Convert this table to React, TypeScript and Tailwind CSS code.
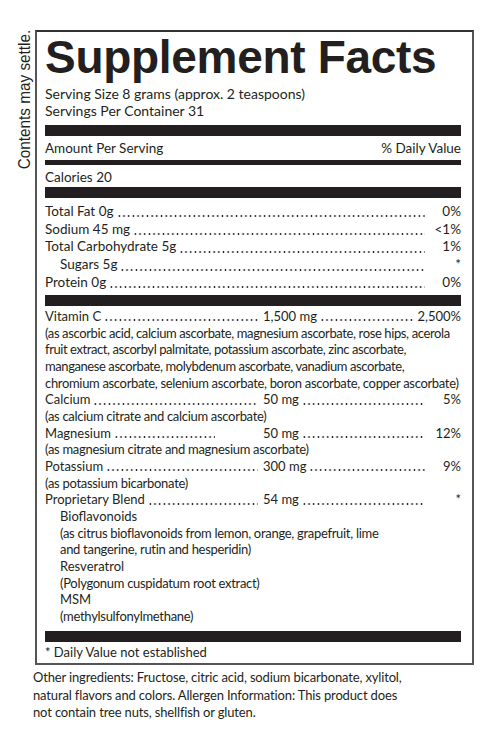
import React from "react";

const body = { fontFamily: "Lato, 'Open Sans', sans-serif" };
const helv = { fontFamily: "'Liberation Sans', Arial, sans-serif" };

// dotted leader drawn as a row of small dots
function Dots({ top = "mt-[11px]" }: { top?: string }) {
  return (
    <span
      className={
        "block h-[4px] min-w-0 flex-1 bg-[radial-gradient(circle,#231f20_0.75px,transparent_1.15px)] bg-[length:4.7px_4px] bg-left bg-repeat-x " +
        top
      }
    ></span>
  );
}

function Bar({ h }: { h: string }) {
  return <div className={"w-full bg-[#231f20] " + h}></div>;
}

// simple nutrient row: label .... value
function Row({ label, value, indent }: { label: string; value: string; indent?: boolean }) {
  return (
    <div className={"flex items-start leading-[17.7px] " + (indent ? "pl-[15px]" : "")}>
      <span className="whitespace-nowrap pr-[3px]">{label}</span>
      <Dots top="mt-[11.5px]" />
      <span className="w-[36px] shrink-0 text-right">{value}</span>
    </div>
  );
}

// row with amount column
function AmtRow({ label, amount, value, labelPad = "" }: { label: string; amount: string; value: string; labelPad?: string }) {
  return (
    <div className="flex items-start">
      <div className={"flex w-[218px] shrink-0 items-start pr-[5px] " + labelPad}>
        <span className="whitespace-nowrap pr-[3px]">{label}</span>
        <Dots top="mt-[10.5px]" />
      </div>
      <div className="flex min-w-0 flex-1 items-start">
        <span className="whitespace-nowrap pr-[3px]">{amount}</span>
        <Dots top="mt-[10.5px]" />
      </div>
      <span className="min-w-[36px] shrink-0 pl-[3px] text-right">{value}</span>
    </div>
  );
}

export default function App() {
  return (
    <div className="h-[736px] w-[496px] bg-white pt-[30px] text-[#231f20]" style={body}>
      <div className="flex">
        {/* Side note, reads bottom to top */}
        <div className="flex w-[34.5px] shrink-0 items-start justify-end pr-[1px]">
          <div
            className="-mt-[8px] h-fit rotate-180 scale-y-[0.9] text-[17px] leading-[18px] [writing-mode:vertical-rl]"
            style={helv}
          >
            Contents may settle.
          </div>
        </div>

        {/* Facts panel */}
        <div className="w-[439px] border-2 border-[#555] border-t-[#333] pb-[3px] pl-[8.5px] pr-[10.5px] pt-[2px] text-[13px]">
          <h1 className="text-[46px] font-bold leading-[46px] tracking-[-0.3px]" style={helv}>
            Supplement Facts
          </h1>
          <div className="mt-[6px] text-[14px] leading-[16.7px]">
            <p>Serving Size 8 grams (approx. 2 teaspoons)</p>
            <p>Servings Per Container 31</p>
          </div>
          <div className="mt-[6px]">
            <Bar h="h-[11px]" />
          </div>
          <div className="mt-[4px] flex justify-between text-[13.5px] leading-[16.5px]">
            <span>Amount Per Serving</span>
            <span>% Daily Value</span>
          </div>
          <div className="mt-[3px]">
            <Bar h="h-[5px]" />
          </div>
          <p className="mt-[4px] text-[13.5px] leading-[16.5px]">Calories 20</p>
          <div className="mt-[2px]">
            <Bar h="h-[11px]" />
          </div>

          <div className="mt-[4.5px] text-[13.5px]">
            <Row label="Total Fat 0g" value="0%" />
            <Row label="Sodium 45 mg" value="<1%" />
            <Row label="Total Carbohydrate 5g" value="1%" />
            <Row label="Sugars 5g" value="*" indent />
            <Row label="Protein 0g" value="0%" />
          </div>
          <div className="mt-[4px]">
            <Bar h="h-[11px]" />
          </div>

          <div className="mt-[1.5px] leading-[16.67px]">
            <AmtRow label="Vitamin C" amount="1,500 mg" value="2,500%" />
            <p className="whitespace-nowrap tracking-[-0.38px]">
              (as ascorbic acid, calcium ascorbate, magnesium ascorbate, rose hips, acerola
            </p>
            <p className="whitespace-nowrap tracking-[-0.42px]">
              fruit extract, ascorbyl palmitate, potassium ascorbate, zinc ascorbate,
            </p>
            <p className="whitespace-nowrap tracking-[-0.42px]">
              manganese ascorbate, molybdenum ascorbate, vanadium ascorbate,
            </p>
            <p className="whitespace-nowrap tracking-[-0.33px]">
              chromium ascorbate, selenium ascorbate, boron ascorbate, copper ascorbate)
            </p>
            <AmtRow label="Calcium" amount="50 mg" value="5%" />
            <p className="tracking-[-0.3px]">(as calcium citrate and calcium ascorbate)</p>
            <AmtRow label="Magnesium" amount="50 mg" value="12%" labelPad="pr-[48px]" />
            <p className="tracking-[-0.3px]">(as magnesium citrate and magnesium ascorbate)</p>
            <AmtRow label="Potassium" amount="300 mg" value="9%" />
            <p className="tracking-[-0.3px]">(as potassium bicarbonate)</p>
            <AmtRow label="Proprietary Blend" amount="54 mg" value="*" />
            <div className="pl-[15px]">
              <p>Bioflavonoids</p>
              <p className="tracking-[-0.3px]">(as citrus bioflavonoids from lemon, orange, grapefruit, lime</p>
              <p className="tracking-[-0.3px]">and tangerine, rutin and hesperidin)</p>
              <p>Resveratrol</p>
              <p className="tracking-[-0.3px]">(Polygonum cuspidatum root extract)</p>
              <p>MSM</p>
              <p className="tracking-[-0.3px]">(methylsulfonylmethane)</p>
            </div>
          </div>
          <div className="mt-[6px]">
            <Bar h="h-[11px]" />
          </div>
          <p className="mt-[2px] leading-[16.5px]">* Daily Value not established</p>
        </div>
      </div>

      <p className="mt-[4px] pl-[33px] pr-[20px] text-[13px] leading-[17.5px] tracking-[-0.15px]">
        Other ingredients: Fructose, citric acid, sodium bicarbonate, xylitol,
        <br />
        natural flavors and colors. Allergen Information: This product does
        <br />
        not contain tree nuts, shellfish or gluten.
      </p>
    </div>
  );
}
